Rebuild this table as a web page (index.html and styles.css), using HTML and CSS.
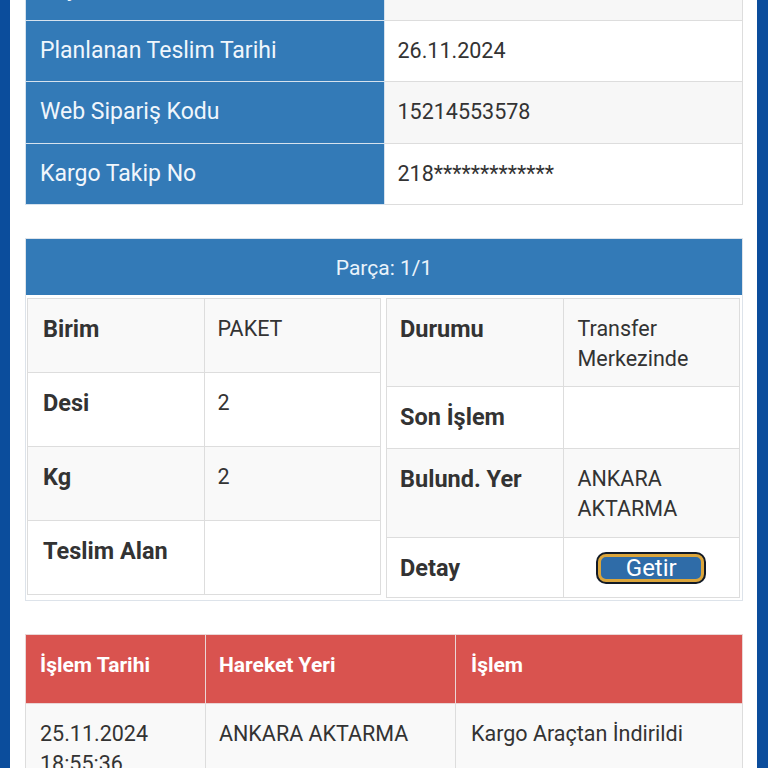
FILE: index.html
```html
<!DOCTYPE html>
<html lang="tr">
<head>
<meta charset="utf-8">
<title>Kargo Takip</title>
<link rel="stylesheet" href="styles.css">
</head>
<body>
<div class="page">
  <div class="content">
    <table class="info">
      <colgroup><col class="half"><col class="half"></colgroup>
      <tr><th>Kayıt Tarihi</th><td>25.11.2024</td></tr>
      <tr><th>Planlanan Teslim Tarihi</th><td>26.11.2024</td></tr>
      <tr><th>Web Sipariş Kodu</th><td>15214553578</td></tr>
      <tr><th>Kargo Takip No</th><td>218*************</td></tr>
    </table>

    <div class="panel">
      <div class="panel-head">Parça: 1/1</div>
      <div class="panel-body">
        <table class="kv kv-left">
          <colgroup><col class="half"><col class="half"></colgroup>
          <tr><th>Birim</th><td>PAKET</td></tr>
          <tr><th>Desi</th><td>2</td></tr>
          <tr><th>Kg</th><td>2</td></tr>
          <tr><th>Teslim Alan</th><td></td></tr>
        </table>
        <table class="kv kv-right">
          <colgroup><col class="half"><col class="half"></colgroup>
          <tr><th>Durumu</th><td>Transfer Merkezinde</td></tr>
          <tr class="single"><th>Son İşlem</th><td></td></tr>
          <tr class="tall"><th>Bulund. Yer</th><td>ANKARA AKTARMA</td></tr>
          <tr class="action"><th>Detay</th><td class="center"><button class="btn-getir" type="button">Getir</button></td></tr>
        </table>
      </div>
    </div>

    <table class="moves">
      <colgroup>
        <col class="c-date">
        <col class="c-place">
        <col class="c-op">
      </colgroup>
      <thead>
        <tr><th>İşlem Tarihi</th><th>Hareket Yeri</th><th>İşlem</th></tr>
      </thead>
      <tbody>
        <tr><td>25.11.2024 18:55:36</td><td>ANKARA AKTARMA</td><td>Kargo Araçtan İndirildi</td></tr>
      </tbody>
    </table>
  </div>
</div>
</body>
</html>
```
FILE: styles.css
```css
*, *::before, *::after {
  box-sizing: border-box;
}

html, body {
  margin: 0;
  padding: 0;
  background: #0b4d9c;
  font-family: Roboto, "Noto Sans", "Liberation Sans", sans-serif;
  color: #333;
}

.page {
  min-height: 768px;
  overflow: hidden;
}

.content {
  background: #fff;
  margin: 0 11px 0 10px;
  padding: 0 14px 60px 15px;
  min-height: 800px;
}

table {
  border-collapse: collapse;
  border-spacing: 0;
}

col.half {
  width: 50%;
}

/* top info table */
.info {
  width: 100%;
  margin-top: -42px;
  table-layout: fixed;
  border: 1px solid #ddd;
}

.info th,
.info td {
  border: 1px solid #ddd;
  padding: 15px 14px;
  line-height: 30.5px;
  text-align: left;
  vertical-align: middle;
}

.info th {
  background: #337ab7;
  color: #f0f6fc;
  font-weight: normal;
  font-size: 23px;
  border-color: #d6e2ee;
}

.info td {
  font-size: 21.5px;
  padding-left: 13px;
  background: #fff;
}

.info tr:nth-child(odd) td {
  background: #f7f7f7;
}

/* panel */
.panel {
  margin-top: 33px;
  border: 1px solid #dde3ea;
}

.panel-head {
  background: #337ab7;
  color: #eaf3fb;
  text-align: center;
  font-size: 21px;
  line-height: 30px;
  padding: 14px 13px 12px;
}

.panel-body {
  display: flex;
  align-items: flex-start;
  gap: 5px;
  padding: 3px 2px 2px 1px;
}

.kv {
  flex: 1 1 0;
  width: 0;
  table-layout: fixed;
  border: 1px solid #ddd;
}

.kv th,
.kv td {
  border: 1px solid #ddd;
  padding: 15px 14px 12px 14px;
  line-height: 30px;
  text-align: left;
  vertical-align: top;
}

.kv th {
  font-size: 23.5px;
  font-weight: bold;
  color: #333;
  padding-left: 15px;
}

.kv td {
  font-size: 21.5px;
  padding-left: 13px;
}

.kv tr:nth-child(odd) th,
.kv tr:nth-child(odd) td {
  background: #f9f9f9;
}

.kv tr:nth-child(even) th,
.kv tr:nth-child(even) td {
  background: #fff;
}

.kv-left tr {
  height: 74px;
}

.kv-right th {
  padding-left: 13px;
}

.kv-right td {
  padding-left: 14px;
}

.kv-right tr.single th,
.kv-right tr.single td {
  padding-bottom: 16px;
}

.kv-right tr.tall th,
.kv-right tr.tall td {
  padding-bottom: 13px;
}

.kv-right tr.action th {
  padding-bottom: 14px;
}

.kv td.center {
  text-align: center;
  vertical-align: middle;
  padding: 0;
}

.btn-getir {
  display: block;
  margin: 0 auto;
  width: 106px;
  height: 28px;
  border: 3px solid #dba53b;
  border-radius: 8px;
  background: #2f6ca8;
  box-shadow: 0 0 0 2px #121a26;
  color: #fff;
  font-family: Roboto, "Noto Sans", sans-serif;
  font-size: 24px;
  line-height: 22px;
  padding: 0;
  overflow: hidden;
}

/* movements table */
.moves {
  width: 100%;
  margin-top: 33px;
  table-layout: fixed;
  border: 1px solid #ddd;
}

.c-date { width: 180px; }
.c-place { width: 250px; }
.c-op { width: auto; }

.moves th {
  background: #d9534f;
  color: #fff;
  font-weight: bold;
  font-size: 21px;
  line-height: 30px;
  text-align: left;
  vertical-align: top;
  padding: 15px 13px 23px 13px;
  border: 1px solid #ead6d6;
}

.moves th:first-child {
  padding-left: 14px;
}

.moves th:last-child {
  padding-left: 15px;
}

.moves td {
  background: #f9f9f9;
  font-size: 21.5px;
  line-height: 30px;
  vertical-align: top;
  padding: 15px 13px;
  border: 1px solid #ddd;
}

.moves td:first-child {
  padding-left: 14px;
}

.moves td:last-child {
  padding-left: 15px;
}
```
